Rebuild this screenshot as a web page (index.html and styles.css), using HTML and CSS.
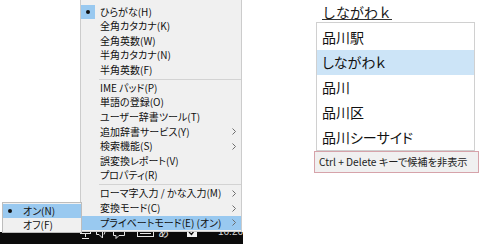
FILE: index.html
```html
<!DOCTYPE html>
<html lang="ja">
<head>
<meta charset="utf-8">
<link rel="stylesheet" href="styles.css">
</head>
<body>
<div class="page">
  <section class="desk">
    <div class="taskbar">
      <div class="tray">
        <svg class="ic ic-chev" width="8" height="24" viewBox="0 0 8 24"><path d="M1 13 L4 10 L7 13" fill="none" stroke="#cfcfcf" stroke-width="1"/></svg>
        <svg class="ic ic-mon" width="11" height="24" viewBox="0 0 11 24"><rect x="0.5" y="5.5" width="10" height="8" fill="none" stroke="#e6e6e6"/><path d="M5.5 13.5 V17 M2 18.5 H9" stroke="#e6e6e6"/><path d="M3 8 V12 M8 8 V12" stroke="#e6e6e6"/></svg>
        <svg class="ic ic-spk" width="11" height="24" viewBox="0 0 11 24"><path d="M0.5 9.5 H3 L6.5 6 V18 L3 14.5 H0.5 Z" fill="none" stroke="#e6e6e6"/><path d="M8 9.5 Q10 12 8 14.5" fill="none" stroke="#e6e6e6"/></svg>
        <svg class="ic ic-msg" width="12" height="24" viewBox="0 0 12 24"><path d="M0.5 5.5 H11.5 V15.5 H6 L3 18.5 V15.5 H0.5 Z" fill="none" stroke="#e6e6e6"/></svg>
        <svg class="ic ic-kbd" width="17" height="24" viewBox="0 0 17 24"><rect x="0.5" y="7.5" width="16" height="9" fill="none" stroke="#e6e6e6"/><path d="M3 13.5 H14 M3 10.5 H4 M6 10.5 H7 M9 10.5 H10 M12 10.5 H13" stroke="#e6e6e6"/></svg>
        <span class="ic ic-a">あ</span>
        <svg class="ic ic-chk" width="10" height="24" viewBox="0 0 10 24"><rect x="0" y="7" width="10" height="10" fill="#f2f2f2"/><path d="M2 12 L4.5 14.5 L8 9.5" fill="none" stroke="#111" stroke-width="1.4"/></svg>
        <span class="ic clock">16:26</span>
      </div>
    </div>

    <div class="menu">
      <div class="mi"><span class="chk"><i class="dot"></i></span><span class="lbl">ひらがな(H)</span><span></span></div>
      <div class="mi"><span></span><span class="lbl">全角カタカナ(K)</span><span></span></div>
      <div class="mi"><span></span><span class="lbl">全角英数(W)</span><span></span></div>
      <div class="mi"><span></span><span class="lbl">半角カタカナ(N)</span><span></span></div>
      <div class="mi"><span></span><span class="lbl">半角英数(F)</span><span></span></div>
      <div class="sep"></div>
      <div class="mi"><span></span><span class="lbl">IME パッド(P)</span><span></span></div>
      <div class="mi"><span></span><span class="lbl">単語の登録(O)</span><span></span></div>
      <div class="mi"><span></span><span class="lbl">ユーザー辞書ツール(T)</span><span></span></div>
      <div class="mi"><span></span><span class="lbl">追加辞書サービス(Y)</span><svg class="arr" width="4" height="7" viewBox="0 0 4 7"><path d="M0.5 0.5 L3.5 3.5 L0.5 6.5" fill="none" stroke="#6d6d6d"/></svg></div>
      <div class="mi"><span></span><span class="lbl">検索機能(S)</span><svg class="arr" width="4" height="7" viewBox="0 0 4 7"><path d="M0.5 0.5 L3.5 3.5 L0.5 6.5" fill="none" stroke="#6d6d6d"/></svg></div>
      <div class="mi"><span></span><span class="lbl">誤変換レポート(V)</span><span></span></div>
      <div class="mi"><span></span><span class="lbl">プロパティ(R)</span><span></span></div>
      <div class="sep"></div>
      <div class="mi"><span></span><span class="lbl">ローマ字入力 / かな入力(M)</span><svg class="arr" width="4" height="7" viewBox="0 0 4 7"><path d="M0.5 0.5 L3.5 3.5 L0.5 6.5" fill="none" stroke="#6d6d6d"/></svg></div>
      <div class="mi"><span></span><span class="lbl">変換モード(C)</span><svg class="arr" width="4" height="7" viewBox="0 0 4 7"><path d="M0.5 0.5 L3.5 3.5 L0.5 6.5" fill="none" stroke="#6d6d6d"/></svg></div>
      <div class="mi hot"><span></span><span class="lbl">プライベートモード(E) (オン)</span><svg class="arr" width="4" height="7" viewBox="0 0 4 7"><path d="M0.5 0.5 L3.5 3.5 L0.5 6.5" fill="none" stroke="#6d6d6d"/></svg></div>
    </div>

    <div class="sub">
      <div class="si hot"><span class="sb"><i class="dot"></i></span><span class="lbl">オン(N)</span></div>
      <div class="si"><span class="sb"></span><span class="lbl">オフ(F)</span></div>
    </div>
  </section>

  <section class="ime">
    <div class="comp">しながわｋ</div>
    <div class="cands">
      <div class="cand">品川駅</div>
      <div class="cand sel">しながわｋ</div>
      <div class="cand">品川</div>
      <div class="cand">品川区</div>
      <div class="cand">品川シーサイド</div>
    </div>
    <div class="hint">Ctrl + Delete キーで候補を非表示</div>
  </section>
</div>
</body>
</html>
```

FILE: styles.css
```css
html, body {
  margin: 0;
  padding: 0;
  background: #ffffff;
}
body {
  font-family: "Noto Sans CJK JP", "Noto Sans", sans-serif;
  color: #111;
}
.page {
  display: flex;
  width: 490px;
  height: 251px;
  overflow: hidden;
}

/* ---------- left: tray menu ---------- */
.desk {
  position: relative;
  width: 245px;
  height: 251px;
  flex: none;
  padding-top: 232px;
  box-sizing: border-box;
}
.taskbar {
  width: 243px;
  height: 12px;
  background: #0b0b0b;
  overflow: hidden;
}
.tray {
  display: flex;
  align-items: center;
  height: 24px;
  margin-top: -12px;
}
.ic { flex: none; display: block; }
.ic-chev { margin-left: 59px; }
.ic-mon { margin-left: 13px; }
.ic-spk { margin-left: 5px; }
.ic-msg { margin-left: 6px; }
.ic-kbd { margin-left: 12px; }
.ic-a {
  margin-left: 4px;
  color: #e6e6e6;
  font-size: 11px;
  line-height: 24px;
}
.ic-chk { margin-left: 18px; }
.clock {
  margin-left: 21px;
  color: #d8d8d8;
  font-family: "Liberation Sans", sans-serif;
  font-size: 10px;
  line-height: 24px;
}

.menu {
  position: absolute;
  left: 80px;
  top: -1px;
  width: 160px;
  padding: 4.5px 0 1px 0;
  background: #f0f0f0;
  border: 1px solid #cccccc;
  z-index: 2;
  font-feature-settings: "palt";
}
.mi {
  display: grid;
  grid-template-columns: 14px 1fr 10px;
  column-gap: 5px;
  align-items: center;
  height: 14.6px;
  font-size: 10px;
  line-height: 14.6px;
  color: #111;
  white-space: nowrap;
}
.mi.hot { background: #99c9f0; }
.chk {
  width: 14px;
  height: 14px;
  background: #99c9f0;
  display: flex;
  align-items: center;
  justify-content: center;
}
.dot {
  display: block;
  width: 4px;
  height: 4px;
  border-radius: 50%;
  background: #111;
}
.arr { display: block; margin-left: 1px; }
.sep {
  height: 3.4px;
  display: flex;
  align-items: center;
  padding-left: 18px;
}
.sep::before {
  content: "";
  display: block;
  height: 1px;
  flex: 1;
  background: #d3d3d3;
}

.sub {
  position: absolute;
  left: 2px;
  top: 202px;
  width: 78px;
  padding: 0.5px 0;
  background: #f0f0f0;
  border: 1px solid #bdbdbd;
  z-index: 3;
  font-feature-settings: "palt";
}
.si {
  display: grid;
  grid-template-columns: 12px 1fr;
  column-gap: 7px;
  align-items: center;
  height: 14px;
  padding-left: 1px;
  font-size: 10px;
  line-height: 14px;
}
.si.hot { background: #99c9f0; }
.sb {
  display: flex;
  align-items: center;
  justify-content: center;
}

/* ---------- right: IME candidates ---------- */
.ime {
  display: flex;
  flex-direction: column;
  align-items: flex-start;
  padding-left: 69px;
}
.comp {
  margin-left: 8px;
  padding-top: 5px;
  font-size: 14px;
  line-height: 14px;
  color: #1a1a1a;
  border-bottom: 1px solid #333;
}
.cands {
  margin: 2px 0 0 2px;
  width: 157px;
  padding: 1.5px 0 0.5px;
  border: 1px solid #d0d0d0;
  background: #fff;
  font-feature-settings: "palt";
}
.cand {
  height: 25px;
  line-height: 25px;
  padding-left: 5px;
  font-size: 14px;
  color: #111;
}
.cand.sel { background: #cce4f7; }
.hint {
  width: 159px;
  height: 20px;
  border: 1px solid #d6a3aa;
  background: #f0f0f0;
  padding-left: 4px;
  box-sizing: content-box;
  font-size: 10.2px;
  line-height: 20px;
  color: #222;
  font-feature-settings: "palt";
  white-space: nowrap;
}
```
